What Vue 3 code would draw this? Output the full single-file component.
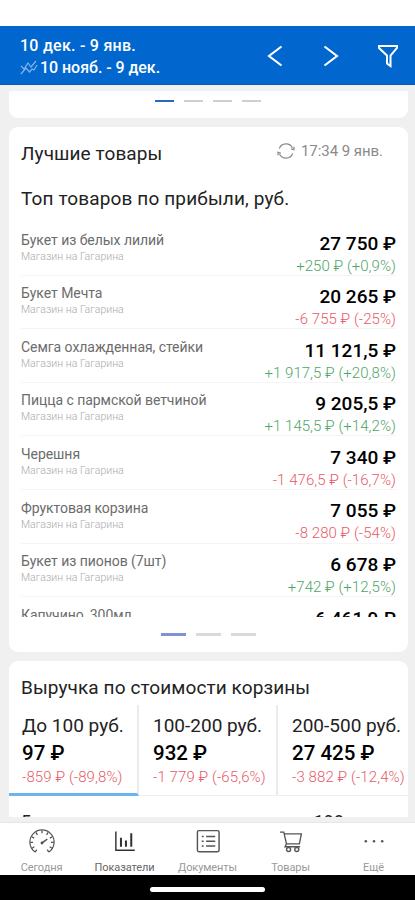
<template>
  <div class="screen">
    <div class="status"></div>
    <header class="header">
      <div class="period">
        <div class="current">{{ period.current }}</div>
        <div class="previous">
          <svg class="trend" viewBox="0 0 18 16">
            <path d="M1 6l3 3L8 3l3 4 5-6" />
            <path d="M1 14l5-6 3.500 4 2.500-3 2 1 3-5" />
          </svg>
          <span>{{ period.previous }}</span>
        </div>
      </div>
      <svg class="arrow" viewBox="0 0 16 22"><path d="M14.500 1.500L2 11l12.500 9.500" /></svg>
      <svg class="arrow next" viewBox="0 0 16 22"><path d="M1.500 1.500L14 11 1.500 20.500" /></svg>
      <svg class="filter" viewBox="0 0 22 24"><path d="M2 2h18v2l-6.500 7.500v10.500l-3.500-2.500v-8L2 4z" /></svg>
    </header>

    <main class="content">
      <section class="card top-card">
        <div class="pager small">
          <i v-for="n in 4" :key="n" :class="{ active: n === 1 }"></i>
        </div>
      </section>

      <section class="card goods">
        <div class="goods-head">
          <h2>Лучшие товары</h2>
          <div class="updated">
            <svg viewBox="0 0 18 18">
              <path d="M2.300 6.500A7.200 7.200 0 0 1 15.500 6M15.700 11.500A7.200 7.200 0 0 1 2.500 12M1 13.300v-3l2.800.8M17 4.700v3l-2.800-.8" />
            </svg>
            <span>17:34 9 янв.</span>
          </div>
        </div>
        <h3>Топ товаров по прибыли, руб.</h3>
        <div class="list">
          <div class="row" v-for="item in goods" :key="item.name">
            <div class="info">
              <div class="name">{{ item.name }}</div>
              <div class="shop" v-if="item.delta">Магазин на Гагарина</div>
            </div>
            <div class="numbers">
              <div class="price">{{ item.price }} ₽</div>
              <div class="delta" :class="deltaClass(item.delta)">{{ item.delta }}</div>
            </div>
          </div>
        </div>
        <div class="pager">
          <i v-for="n in 3" :key="n" :class="{ active: n === 1 }"></i>
        </div>
      </section>

      <section class="card baskets">
        <h2>Выручка по стоимости корзины</h2>
        <div class="tabs">
          <div class="tab" v-for="(b, i) in baskets" :key="b.title" :class="{ selected: i === 0 }">
            <div class="tab-title">{{ b.title }}</div>
            <div class="tab-sum">{{ b.sum }} ₽</div>
            <div class="tab-delta" :class="deltaClass(b.delta)">{{ b.delta }}</div>
          </div>
        </div>
        <div class="cut">
          <span>5</span>
          <span class="cut-value">198</span>
        </div>
      </section>
    </main>

    <nav class="nav">
      <div class="nav-item">
        <svg viewBox="0 0 28 26">
          <path d="M7 24A12.600 12.600 0 1 1 21 24" stroke-width="1.200" />
          <path d="M14 1.500v3M7.700 3.500l1.500 2.600M20.300 3.500l-1.500 2.600M3.300 8l2.600 1.500M24.700 8l-2.600 1.500M1.700 14h3M26.300 14h-3M3.500 20l2.500-1.500M24.500 20L22 18.500M7 24l1.500-2.500M21 24L19.500 21.500" stroke-width="1.300" />
          <path d="M14 14.500l5.500-4" stroke-width="1.500" />
          <circle cx="14" cy="14.500" r="1.500" class="fill" />
        </svg>
        <span>Сегодня</span>
      </div>
      <div class="nav-item active">
        <svg viewBox="0 0 28 26">
          <path d="M4.500 2.500v19.500h19.700" stroke-width="1.500" />
          <path d="M9.800 9v9.500M15 12v6.500M20.500 4.500v14" stroke-width="2.100" />
        </svg>
        <span>Показатели</span>
      </div>
      <div class="nav-item">
        <svg viewBox="0 0 28 26">
          <rect x="3" y="1.700" width="22.500" height="22" rx="1.500" stroke-width="1.500" />
          <path d="M7.500 7.700h2M12 7.700h9.500M7.500 12.700h2M12 12.700h9.500M7.500 17.700h2M12 17.700h9.500" stroke-width="1.500" />
        </svg>
        <span>Документы</span>
      </div>
      <div class="nav-item">
        <svg viewBox="0 0 28 26">
          <path d="M2.500 3.300h4l2.800 12.200-1.500 3h15.700M7 5h17.800l-2.100 10.500H9.500" stroke-width="1.400" />
          <circle cx="11.500" cy="21.300" r="2.100" stroke-width="1.400" />
          <circle cx="20" cy="21.300" r="2.100" stroke-width="1.400" />
        </svg>
        <span>Товары</span>
      </div>
      <div class="nav-item">
        <svg viewBox="0 0 28 26">
          <circle cx="5.500" cy="12.700" r="1.300" class="fill" />
          <circle cx="14" cy="12.700" r="1.300" class="fill" />
          <circle cx="22.500" cy="12.700" r="1.300" class="fill" />
        </svg>
        <span>Ещё</span>
      </div>
    </nav>
    <div class="home"><div class="pill"></div></div>
  </div>
</template>

<script setup>
import { ref } from "vue"

const period = ref({ current: "10 дек. - 9 янв.", previous: "10 нояб. - 9 дек." })

const goods = ref([
  { name: "Букет из белых лилий", price: "27 750", delta: "+250 ₽ (+0,9%)" },
  { name: "Букет Мечта", price: "20 265", delta: "-6 755 ₽ (-25%)" },
  { name: "Семга охлажденная, стейки", price: "11 121,5", delta: "+1 917,5 ₽ (+20,8%)" },
  { name: "Пицца с пармской ветчиной", price: "9 205,5", delta: "+1 145,5 ₽ (+14,2%)" },
  { name: "Черешня", price: "7 340", delta: "-1 476,5 ₽ (-16,7%)" },
  { name: "Фруктовая корзина", price: "7 055", delta: "-8 280 ₽ (-54%)" },
  { name: "Букет из пионов (7шт)", price: "6 678", delta: "+742 ₽ (+12,5%)" },
  { name: "Капучино, 300мл", price: "6 461,9", delta: "" },
])

const baskets = ref([
  { title: "До 100 руб.", sum: "97", delta: "-859 ₽ (-89,8%)" },
  { title: "100-200 руб.", sum: "932", delta: "-1 779 ₽ (-65,6%)" },
  { title: "200-500 руб.", sum: "27 425", delta: "-3 882 ₽ (-12,4%)" },
])

// зелёный - рост, красный - падение
const deltaClass = (delta) => (delta.startsWith("-") ? "down" : "up")
</script>

<style>
body {
  margin: 0;
  background: #fff;
}
</style>

<style scoped>
.screen {
  width: 415px;
  height: 900px;
  display: flex;
  flex-direction: column;
  overflow: hidden;
  background: #f0f0f0;
  font-family: Roboto, "Liberation Sans", sans-serif;
  color: #222;
  white-space: nowrap;
}
.status {
  height: 26px;
  flex: none;
  background: #fff;
}
.header {
  height: 59px;
  flex: none;
  box-sizing: border-box;
  display: flex;
  align-items: center;
  padding: 2px 16px 0 20px;
  background: #0167cf;
  border-bottom: 1px solid #0a55b8;
  color: #fff;
}
.period {
  flex: 1;
  padding-top: 2px;
  font-size: 16px;
  line-height: 22px;
  font-weight: 500;
}
.current {
  letter-spacing: 0.25px;
}
.previous {
  display: flex;
  align-items: center;
  gap: 2px;
  letter-spacing: -0.05px;
}
svg {
  fill: none;
  stroke: currentColor;
}
.trend {
  width: 18px;
  height: 16px;
  color: #7fb5ea;
  stroke-width: 1.2;
}
.arrow {
  width: 16px;
  height: 22px;
  stroke-width: 2.1;
  margin-right: 40px;
}
.arrow.next {
  margin-right: 38px;
}
.filter {
  width: 22px;
  height: 24px;
  stroke-width: 2;
}
.content {
  flex: 1;
  min-height: 0;
  padding: 6px 7px 0 9px;
  overflow: hidden;
}
.card {
  background: #fff;
  border-radius: 9px;
}
.top-card {
  height: 27px;
  border-radius: 0 0 9px 9px;
  margin-bottom: 9px;
}
.pager {
  display: flex;
  justify-content: center;
  gap: 10px;
}
.pager i {
  width: 25px;
  height: 3px;
  background: #dadada;
}
.pager i.active {
  background: #7f92d4;
}
.pager.small {
  padding: 9px 1px 0 0;
}
.pager.small i {
  width: 19px;
  height: 2px;
  background: #cfcfcf;
}
.pager.small i.active {
  background: #2a67c4;
}
h2,
h3 {
  margin: 0;
  font-size: 19px;
  line-height: 24px;
  font-weight: 400;
  letter-spacing: 0.1px;
}
.goods {
  height: 525px;
  margin-bottom: 9px;
}
.goods-head {
  display: flex;
  justify-content: space-between;
  padding: 15px 25px 0 12px;
}
.updated {
  height: 17px;
  display: flex;
  align-items: center;
  gap: 6px;
  font-size: 15px;
  letter-spacing: -0.05px;
  color: #8a8a8a;
}
.updated svg {
  width: 18px;
  height: 18px;
  stroke-width: 1.2;
}
h3 {
  padding: 21px 12px 0;
  letter-spacing: 0.13px;
}
.list {
  height: 395px;
  margin: 11px 12px 16px;
  overflow: hidden;
}
.row {
  height: 53.6px;
  box-sizing: border-box;
  display: flex;
  justify-content: space-between;
  border-bottom: 1px solid #f4f4f4;
}
.name {
  padding-top: 8.6px;
  font-size: 14px;
  line-height: 18px;
  letter-spacing: -0.05px;
  color: #6c6c6c;
}
.shop {
  padding-top: 1px;
  font-size: 10.5px;
  line-height: 14px;
  font-weight: 300;
  letter-spacing: 0.03px;
  color: #aaa;
}
.numbers {
  text-align: right;
}
.price {
  padding-top: 9.5px;
  font-size: 19px;
  line-height: 24px;
  font-weight: 500;
  color: #000;
}
.delta {
  font-size: 15px;
  line-height: 20px;
  font-weight: 300;
  letter-spacing: 0.05px;
}
.up {
  color: #4fa568;
}
.down {
  color: #e85a68;
}
.baskets {
  height: 156px;
  border-radius: 9px 9px 0 0;
  overflow: hidden;
}
.baskets h2 {
  padding: 15px 12px 5px;
  letter-spacing: 0.1px;
}
.tabs {
  display: flex;
}
.tab {
  width: 139px;
  height: 91px;
  flex: none;
  box-sizing: border-box;
  padding: 9px 0 0 14px;
  border-right: 2px solid #ebebeb;
  border-bottom: 1px solid #efefef;
}
.tab.selected {
  width: 130px;
  padding-left: 13px;
  border-bottom: 3px solid #6db4ee;
}
.tab-title {
  font-size: 19px;
  line-height: 24px;
}
.tab-sum {
  font-size: 20.5px;
  line-height: 30px;
  font-weight: 500;
  color: #000;
}
.tab-delta {
  font-size: 15px;
  line-height: 19px;
  font-weight: 300;
  letter-spacing: 0.1px;
}
.cut {
  height: 21px;
  box-sizing: border-box;
  display: flex;
  justify-content: space-between;
  padding: 16px 64px 0 12px;
  font-size: 18px;
  line-height: 20px;
}
.nav {
  height: 53px;
  flex: none;
  box-sizing: border-box;
  display: flex;
  padding-top: 6px;
  background: #fff;
  border-top: 1px solid #e6e6e6;
}
.nav-item {
  flex: 1;
  display: flex;
  flex-direction: column;
  align-items: center;
  font-size: 11px;
  line-height: 14px;
  letter-spacing: -0.1px;
  color: #999;
}
.nav-item svg {
  width: 28px;
  height: 26px;
  margin-bottom: 7px;
  color: #555;
}
.nav-item.active {
  color: #666;
}
.nav-item.active svg {
  color: #333;
}
.fill {
  fill: currentColor;
  stroke: none;
}
.home {
  height: 25px;
  flex: none;
  display: flex;
  justify-content: center;
  background: #000;
}
.pill {
  width: 115px;
  height: 5px;
  margin-top: 12px;
  border-radius: 3px;
  background: #fff;
}
</style>
